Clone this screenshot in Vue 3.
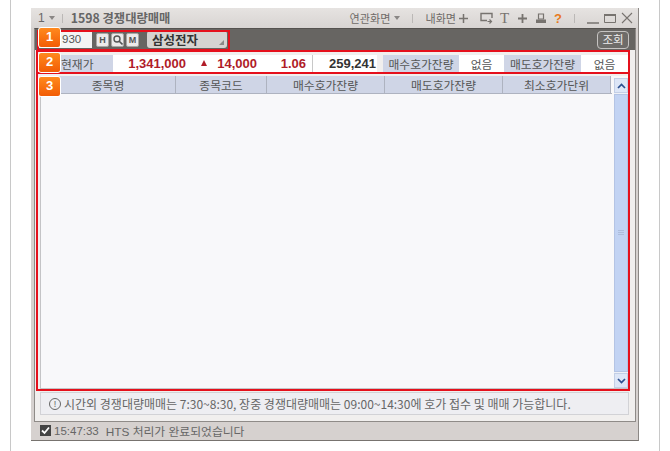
<template>
  <div class="page">
    <div class="window">
      <div class="titlebar">
        <span class="win-no">1</span>
        <span class="arrow-down"></span>
        <span class="sep"></span>
        <span class="title">1598 경쟁대량매매</span>
        <span class="spacer"></span>
        <span class="menu">연관화면</span>
        <span class="arrow-down"></span>
        <span class="sep wide"></span>
        <span class="menu">내화면</span>
        <svg class="my-plus" width="9" height="9" viewBox="0 0 9 9"><path d="M0 4.500h9M4.500 0v9" stroke="#77736f" stroke-width="1.500" /></svg>
        <svg class="ico-screen" width="13" height="12" viewBox="0 0 13 12"><path d="M7 8.500H1V1.500h11V6" fill="none" stroke="#77736f" stroke-width="1.400" /><path d="M7.500 9.500h4M9.500 7.500l2 2-2 2" fill="none" stroke="#77736f" stroke-width="1.200" /></svg>
        <span class="t-icon">T</span>
        <svg class="ico-plus" width="9" height="9" viewBox="0 0 9 9"><path d="M0 4.500h9M4.500 0v9" stroke="#77736f" stroke-width="1.800" /></svg>
        <svg class="ico-print" width="10" height="11" viewBox="0 0 10 11"><path d="M2.500 1h5v5h-5z" fill="none" stroke="#77736f" stroke-width="1.200" /><path d="M0 6.500h10V10H0z" fill="#77736f" /></svg>
        <span class="help">?</span>
        <span class="sep wide"></span>
        <svg class="ctl" width="12" height="12" viewBox="0 0 12 12"><path d="M0 11h12" stroke="#77736f" stroke-width="1.500" /></svg>
        <svg class="ctl" width="12" height="12" viewBox="0 0 12 12"><path d="M.5 2.500h11v8H.5z" fill="none" stroke="#77736f" /><path d="M0 3h12" stroke="#77736f" stroke-width="2" /></svg>
        <svg class="ctl" width="12" height="12" viewBox="0 0 12 12"><path d="M1 1l10 10M11 1L1 11" stroke="#77736f" stroke-width="1.100" /></svg>
      </div>

      <div class="frame">
        <div class="toolbar">
          <div class="code">930</div>
          <span class="tool-btn">H</span>
          <span class="tool-btn">
            <svg width="10" height="10" viewBox="0 0 10 10"><circle cx="4" cy="4" r="3" fill="none" stroke="#555" stroke-width="1.400" /><path d="M6 6l3.500 3.500" stroke="#555" stroke-width="1.600" /></svg>
          </span>
          <span class="tool-btn">M</span>
          <div class="stock-name">삼성전자<span class="corner"></span></div>
          <span class="spacer"></span>
          <button class="search-btn">조회</button>
        </div>

        <div class="panel">
          <div class="quote-row">
            <span class="q-label first">현재가</span>
            <span class="q-val price">1,341,000</span>
            <span class="q-val change"><i class="arrow-up"></i>14,000</span>
            <span class="q-val rate">1.06</span>
            <span class="q-val volume">259,241</span>
            <span class="q-label buy">매수호가잔량</span>
            <span class="q-val none">없음</span>
            <span class="q-label sell">매도호가잔량</span>
            <span class="q-val none last">없음</span>
          </div>

          <div class="grid">
            <div class="grid-main">
              <div class="grid-head">
                <div v-for="col in columns" :key="col.name" class="head-cell" :style="{ width: col.width + 'px' }">{{ col.name }}</div>
              </div>
              <div class="grid-body"></div>
            </div>
            <div class="scrollbar">
              <div class="scroll-btn">
                <svg width="9" height="6" viewBox="0 0 9 6"><path d="M1 5l3.500-3.500L8 5" fill="none" stroke="#2b4f8f" stroke-width="1.700" /></svg>
              </div>
              <div class="scroll-thumb"><span class="grip"></span></div>
              <div class="scroll-btn">
                <svg width="9" height="6" viewBox="0 0 9 6"><path d="M1 1l3.500 3.500L8 1" fill="none" stroke="#2b4f8f" stroke-width="1.700" /></svg>
              </div>
            </div>
          </div>

          <div class="notice">
            <span class="info">!</span>
            시간외 경쟁대량매매는 7:30~8:30, 장중 경쟁대량매매는 09:00~14:30에 호가 접수 및 매매 가능합니다.
          </div>
        </div>
      </div>

      <div class="statusbar">
        <span class="check">
          <svg width="9" height="9" viewBox="0 0 9 9"><path d="M1 4.500l2.500 2.500L8 1.500" fill="none" stroke="#fff" stroke-width="1.800" /></svg>
        </span>
        <span>15:47:33</span>
        <span class="status-msg">HTS 처리가 완료되었습니다</span>
      </div>

      <div class="mark box-one"></div>
      <div class="mark box-two"></div>
      <div class="mark box-three"></div>
      <span class="badge b1">1</span>
      <span class="badge b2">2</span>
      <span class="badge b3">3</span>
    </div>
  </div>
</template>

<script setup>
const columns = [
  { name: "종목명", width: 135 },
  { name: "종목코드", width: 91 },
  { name: "매수호가잔량", width: 118 },
  { name: "매도호가잔량", width: 118 },
  { name: "최소호가단위", width: 108 },
];
</script>

<style>
html,
body {
  margin: 0;
  background: #fff;
}
</style>

<style scoped>
.page {
  box-sizing: border-box;
  width: 650px;
  height: 451px;
  margin-left: 10px;
  padding: 8px 0 0 20px;
  border-left: 1px solid #c8c8c8;
  border-right: 1px solid #c8c8c8;
  font-family: "Noto Sans CJK KR", "Liberation Sans", sans-serif;
  color: #555;
}

.window {
  position: relative;
  box-sizing: border-box;
  width: 608px;
  height: 433px;
  background: #d6d1cf;
  border-right: 1px solid #8c8885;
  border-bottom: 1px solid #77736f;
}

.titlebar {
  display: flex;
  align-items: center;
  height: 20px;
  padding: 0 5px 0 7px;
  background: linear-gradient(#e6e3e1, #d8d4d2);
  color: #666;
}

.win-no {
  font-family: "Liberation Sans", sans-serif;
  font-size: 12px;
}

.arrow-down {
  width: 0;
  height: 0;
  margin-left: 4px;
  border-left: 3.500px solid transparent;
  border-right: 3.500px solid transparent;
  border-top: 4px solid #8a8785;
}

.sep {
  width: 1px;
  height: 9px;
  margin: 0 8px 0 7px;
  background: #bbb8b6;
}

.sep.wide {
  margin: 0 12px;
}

.title {
  font-weight: 700;
  font-size: 12.300px;
  color: #666;
}

.spacer {
  flex: 1;
}

.menu {
  font-size: 11.100px;
  color: #6f6b68;
}

.my-plus {
  margin-left: 3px;
}

.ico-screen {
  margin-left: 12px;
}

.t-icon {
  width: 9px;
  margin-left: 7px;
  font-family: "Liberation Serif", serif;
  font-size: 15px;
  line-height: 15px;
  color: #77736f;
}

.ico-plus {
  margin-left: 9px;
}

.ico-print {
  margin-left: 9px;
}

.help {
  margin-left: 8px;
  font-family: "Liberation Sans", sans-serif;
  font-weight: 700;
  font-size: 13px;
  color: #e87a1d;
}

.ctl + .ctl {
  margin-left: 5px;
}

.frame {
  box-sizing: border-box;
  height: 394px;
  margin: 0 2px 0 3px;
  border: 1px solid #8f8b88;
  border-top-color: #55524f;
  background: #f1efee;
}

.toolbar {
  display: flex;
  align-items: center;
  height: 21px;
  padding: 0 6px 0 3px;
  background: #676562;
}

.code {
  box-sizing: border-box;
  width: 54px;
  height: 17px;
  margin-right: 4px;
  padding-left: 24px;
  background: #f4f4f4;
  font-family: "Liberation Sans", sans-serif;
  font-size: 11.500px;
  line-height: 17px;
  color: #555;
}

.tool-btn {
  display: flex;
  box-sizing: border-box;
  align-items: center;
  justify-content: center;
  width: 13px;
  height: 14px;
  margin-right: 2px;
  border: 1px solid #a9a6a3;
  border-radius: 2px;
  background: #eceaea;
  font-family: "Liberation Sans", sans-serif;
  font-weight: 700;
  font-size: 9px;
  color: #555;
}

.stock-name {
  position: relative;
  box-sizing: border-box;
  width: 80px;
  height: 17px;
  margin-left: 6px;
  padding-left: 5px;
  border-radius: 3px;
  background: #d6d3d1;
  font-weight: 700;
  font-size: 12.500px;
  line-height: 17px;
  color: #333;
}

.corner {
  position: absolute;
  right: 3px;
  bottom: 3px;
  width: 0;
  height: 0;
  border-left: 5px solid transparent;
  border-bottom: 5px solid #8b8886;
}

.search-btn {
  box-sizing: border-box;
  width: 32px;
  height: 18px;
  padding: 0;
  border: 1px solid #c5c3c1;
  border-radius: 4px;
  background: #6e6c69;
  font-family: "Noto Sans CJK KR", sans-serif;
  font-size: 11.500px;
  line-height: 15px;
  color: #eee;
}

.panel {
  padding: 0 6px 0 5px;
}

.quote-row {
  display: flex;
  align-items: stretch;
  height: 17px;
  margin-top: 5px;
  font-size: 11.800px;
  line-height: 17px;
}

.q-label {
  box-sizing: border-box;
  flex: none;
  background: #cfd5e6;
  text-align: center;
  color: #555;
}

.q-label.first {
  width: 73px;
  padding-left: 21px;
  text-align: left;
}

.q-label.buy {
  width: 76px;
  margin-left: 6px;
}

.q-label.sell {
  width: 77px;
}

.q-val {
  box-sizing: border-box;
  flex: none;
  background: #fff;
  text-align: right;
  font-family: "Liberation Sans", sans-serif;
  font-weight: 700;
  font-size: 13px;
  color: #b01c28;
}

.price {
  width: 77px;
  padding-right: 4px;
}

.change {
  width: 81px;
  padding-right: 14px;
}

.rate {
  width: 41px;
  padding-right: 6px;
}

.volume {
  width: 65px;
  border-left: 1px solid #c8c8c8;
  padding-right: 1px;
  color: #333;
}

.none {
  width: 45px;
  text-align: center;
  font-family: "Noto Sans CJK KR", sans-serif;
  font-weight: 400;
  font-size: 11.800px;
  color: #555;
}

.none.last {
  width: 47px;
}

.arrow-up {
  display: inline-block;
  width: 0;
  height: 0;
  margin-right: 10px;
  vertical-align: 2px;
  border-left: 3.500px solid transparent;
  border-right: 3.500px solid transparent;
  border-bottom: 6px solid #b01c28;
}

.grid {
  display: flex;
  box-sizing: border-box;
  height: 313px;
  margin-top: 4px;
  background: #f8f8fa;
  border-left: 1px solid #c4c4c6;
  border-bottom: 1px solid #c4c4c6;
}

.grid-main {
  display: flex;
  flex-direction: column;
  flex: 1;
}

.grid-head {
  display: flex;
  height: 17px;
  border-bottom: 1px solid #aeb3c0;
}

.head-cell {
  box-sizing: border-box;
  flex: none;
  border-right: 1px solid #aeb3c0;
  background: #cfd5e6;
  text-align: center;
  font-size: 11.800px;
  line-height: 17px;
  color: #555;
}

.grid-body {
  flex: 1;
}

.scrollbar {
  display: flex;
  flex-direction: column;
  flex: none;
  width: 14px;
  margin: 2px 1px 0 2px;
  background: #eef0f6;
}

.scroll-btn {
  display: flex;
  flex: none;
  align-items: center;
  justify-content: center;
  height: 15px;
  background: #dde6f7;
  border: 1px solid #c3cfe6;
  box-sizing: border-box;
}

.scroll-thumb {
  display: flex;
  flex: 1;
  align-items: center;
  justify-content: center;
  margin: 1px 0;
  background: #c2d3f3;
  border: 1px solid #b4c4e4;
}

.grip {
  width: 6px;
  height: 6px;
  background: repeating-linear-gradient(#adbddc 0 1px, transparent 1px 2px);
}

.notice {
  display: flex;
  box-sizing: border-box;
  align-items: center;
  height: 23px;
  margin-top: 3px;
  padding-left: 8px;
  border: 1px solid #d2d2d6;
  background: #eeeef2;
  font-size: 12px;
  white-space: nowrap;
  color: #666;
}

.info {
  display: inline-block;
  box-sizing: border-box;
  flex: none;
  width: 12px;
  height: 12px;
  margin-right: 3px;
  border: 1px solid #666;
  border-radius: 50%;
  text-align: center;
  font-family: "Liberation Sans", sans-serif;
  font-size: 9px;
  line-height: 10px;
}

.statusbar {
  display: flex;
  align-items: center;
  height: 17px;
  padding-left: 9px;
  font-family: "Liberation Sans", sans-serif;
  font-size: 11.500px;
  color: #666;
}

.check {
  display: flex;
  align-items: center;
  justify-content: center;
  width: 11px;
  height: 11px;
  margin-right: 3px;
  background: #444;
}

.status-msg {
  margin-left: 7px;
  font-family: "Liberation Sans", "Noto Sans CJK KR", sans-serif;
  font-size: 11.800px;
}

/* 설명용 빨간 박스와 번호 */
.mark {
  position: absolute;
  box-sizing: border-box;
  border: 2px solid #e5101c;
  pointer-events: none;
}

.box-one {
  left: 6px;
  top: 22px;
  width: 193px;
  height: 21px;
}

.box-two {
  left: 5px;
  top: 42px;
  width: 594px;
  height: 24px;
}

.box-three {
  left: 5px;
  top: 64px;
  width: 594px;
  height: 319px;
}

.badge {
  position: absolute;
  left: 7px;
  box-sizing: border-box;
  width: 23px;
  height: 21px;
  border: 1px solid #fff;
  border-radius: 3px;
  background: linear-gradient(#ff8a1e, #f25c05);
  text-align: center;
  font-family: "Liberation Sans", sans-serif;
  font-weight: 700;
  font-size: 13px;
  line-height: 18px;
  color: #fff;
}

.b1 {
  top: 19px;
}

.b2 {
  top: 44px;
}

.b3 {
  top: 68px;
}
</style>
